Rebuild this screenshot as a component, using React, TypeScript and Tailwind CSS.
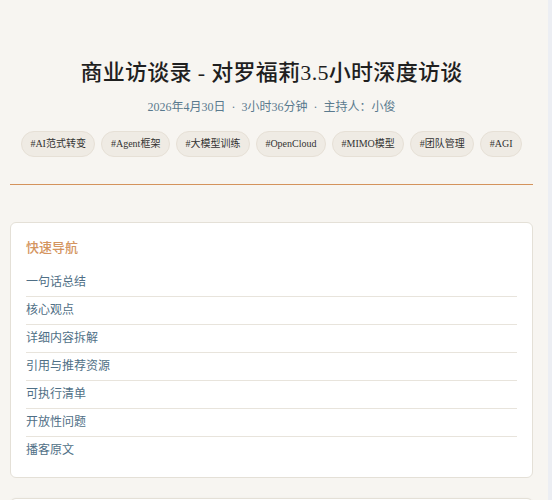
import React from "react";

const tags = ["#AI范式转变", "#Agent框架", "#大模型训练", "#OpenCloud", "#MIMO模型", "#团队管理", "#AGI"];

const navItems = ["一句话总结", "核心观点", "详细内容拆解", "引用与推荐资源", "可执行清单", "开放性问题", "播客原文"];

const serif = { fontFamily: '"Liberation Serif", "Noto Sans CJK SC", serif' };

export default function App() {
  return (
    <div className="flex h-screen overflow-hidden bg-[#f7f5f1] text-[#222]" style={serif}>
      <main className="flex-1 overflow-hidden pl-[10px] pr-[15px]">
        {/* Header */}
        <header className="border-b border-[#d4935c] pt-[58px] pb-[27px] text-center">
          <h1 className="text-[22px] leading-[30px] font-medium tracking-[0.3px] text-[#1f1f1f]">
            商业访谈录 - 对罗福莉3.5小时深度访谈
          </h1>
          <p className="mt-[9px] text-[12px] leading-[20px] text-[#5a7a8e]">
            2026年4月30日<span className="mx-[6px]">·</span>3小时36分钟<span className="mx-[6px]">·</span>主持人：小俊
          </p>
          <div className="mt-[14px] flex flex-nowrap justify-center gap-[6px]">
            {tags.map((tag) => (
              <span
                key={tag}
                className="shrink-0 rounded-full border border-[#e6e0d6] bg-[#efebe4] px-[8.5px] text-[10px] leading-[24px] text-[#333]"
              >
                {tag}
              </span>
            ))}
          </div>
        </header>

        {/* Quick navigation */}
        <section className="mt-[37px] rounded-[6px] border border-[#e4e0d7] bg-white px-[15px] pt-[15px] pb-[13px]">
          <h2 className="mb-[11px] text-[13px] leading-[20px] font-medium text-[#d4955f]">快速导航</h2>
          <ul>
            {navItems.map((item, i) => (
              <li
                key={item}
                className={`py-[5px] text-[12px] leading-[17px] text-[#4f6f86] ${
                  i < navItems.length - 1 ? "border-b border-[#e8e4dc]" : ""
                }`}
              >
                {item}
              </li>
            ))}
          </ul>
        </section>

        <section className="mt-[20px] h-[40px] rounded-[6px] border border-[#e4e0d7] bg-white shadow-sm" />
      </main>
      <div className="w-[4px] shrink-0 bg-[#eceef3]" />
    </div>
  );
}
